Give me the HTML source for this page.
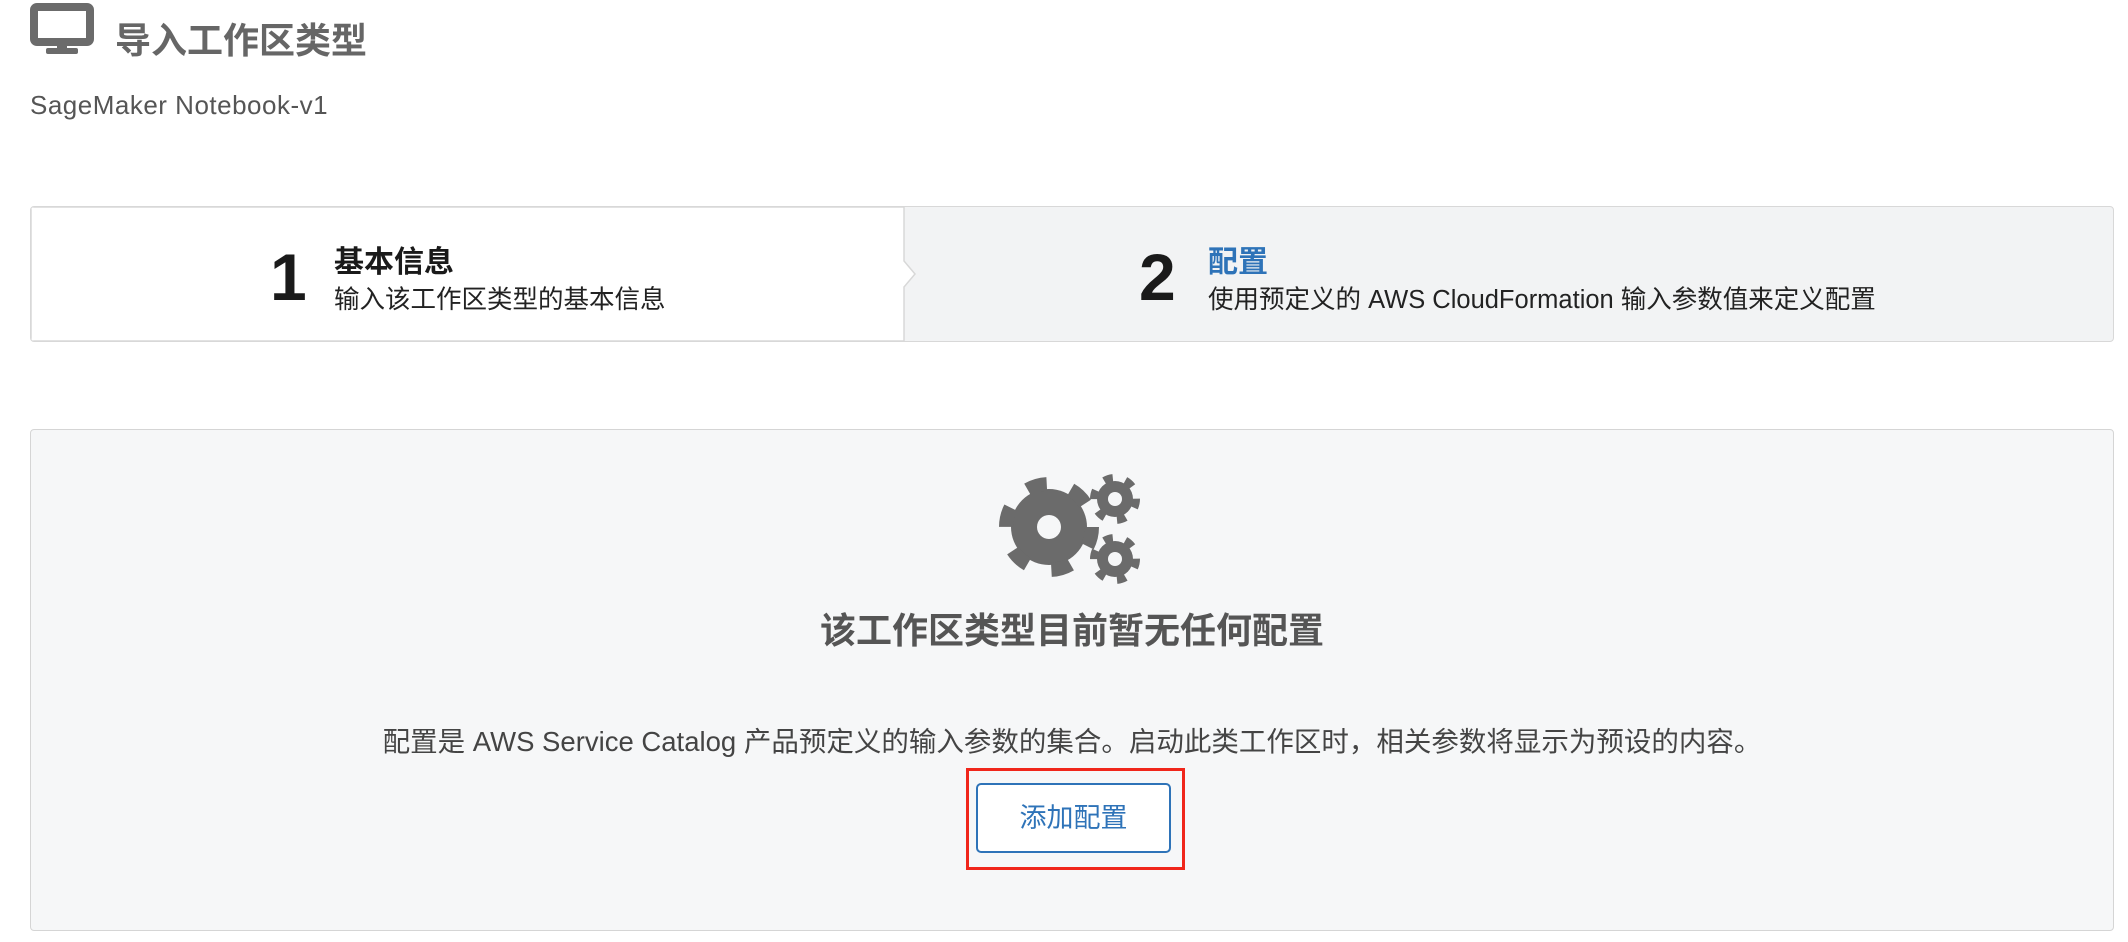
<!DOCTYPE html>
<html><head><meta charset="utf-8"><style>
body{margin:0;width:2128px;height:942px;background:#fff;font-family:"Liberation Sans","Noto Sans CJK SC",sans-serif;position:relative;overflow:hidden}
.a{position:absolute;white-space:nowrap}
</style></head><body>
<svg class="a" style="left:30px;top:3px" width="64" height="52" viewBox="0 0 64 52">
<rect x="4" y="4" width="56" height="35" rx="3" fill="none" stroke="#6b6b6b" stroke-width="8"/>
<rect x="27" y="39" width="10" height="8" fill="#6b6b6b"/>
<rect x="16" y="45" width="32" height="6" rx="2" fill="#6b6b6b"/>
</svg>
<div class="a" style="left:115px;top:12px;font-size:36px;font-weight:bold;color:#666">导入工作区类型</div>
<div class="a" style="left:30px;top:90px;font-size:26px;letter-spacing:0.5px;color:#555">SageMaker Notebook-v1</div>

<div class="a" style="left:30px;top:206px;width:2082px;height:134px;border:1px solid #d8d8d8;border-radius:4px;background:#f2f3f4;overflow:hidden">
<svg class="a" style="left:0;top:0" width="900" height="134"><path d="M0 0H873V54L884 67L873 80V134H0Z" fill="#fff" stroke="#d8d8d8" stroke-width="1.5"/></svg>
<div class="a" style="left:239px;top:30px;font-size:66px;font-weight:bold;color:#1a1a1a;line-height:80px">1</div>
<div class="a" style="left:303px;top:30px;font-size:30px;font-weight:bold;color:#1a1a1a">基本信息</div>
<div class="a" style="left:303px;top:72px;font-size:25.5px;color:#222">输入该工作区类型的基本信息</div>
<div class="a" style="left:1108px;top:30px;font-size:66px;font-weight:bold;color:#1a1a1a;line-height:80px">2</div>
<div class="a" style="left:1177px;top:30px;font-size:30px;font-weight:bold;color:#2e73b8">配置</div>
<div class="a" style="left:1177px;top:72px;font-size:25.5px;color:#222">使用预定义的 AWS CloudFormation 输入参数值来定义配置</div>
</div>

<div class="a" style="left:30px;top:429px;width:2082px;height:500px;border:1px solid #d5d5d5;border-radius:4px;background:#f6f7f8"></div>
<svg class="a" style="left:990px;top:465px" width="160" height="130" viewBox="990 465 160 130">
<g fill="#6b6b6b">
<circle cx="1049" cy="527" r="38"/>
<circle cx="1049" cy="527" r="43" fill="none" stroke="#6b6b6b" stroke-width="14" stroke-dasharray="20 25"/>
<circle cx="1115" cy="499" r="18"/>
<circle cx="1115" cy="499" r="21" fill="none" stroke="#6b6b6b" stroke-width="8" stroke-dasharray="9 12.9"/>
<circle cx="1115" cy="559" r="18"/>
<circle cx="1115" cy="559" r="21" fill="none" stroke="#6b6b6b" stroke-width="8" stroke-dasharray="9 12.9"/>
</g>
<circle cx="1049" cy="527" r="12" fill="#f6f7f8"/>
<circle cx="1115" cy="499" r="7" fill="#f6f7f8"/>
<circle cx="1115" cy="559" r="7" fill="#f6f7f8"/>
</svg>
<div class="a" style="left:0;width:2144px;text-align:center;top:602px;font-size:36px;font-weight:bold;color:#555">该工作区类型目前暂无任何配置</div>
<div class="a" style="left:0;width:2144px;text-align:center;top:719px;font-size:27.5px;color:#444">配置是 AWS Service Catalog 产品预定义的输入参数的集合。启动此类工作区时，相关参数将显示为预设的内容。</div>
<div class="a" style="left:966px;top:768px;width:213px;height:96px;border:3px solid #f0261b"></div>
<div class="a" style="left:976px;top:783px;width:191px;height:66px;border:2px solid #2e73b8;border-radius:5px;background:#fff;text-align:center;line-height:66px;font-size:27px;color:#2e73b8">添加配置</div>
</body></html>
